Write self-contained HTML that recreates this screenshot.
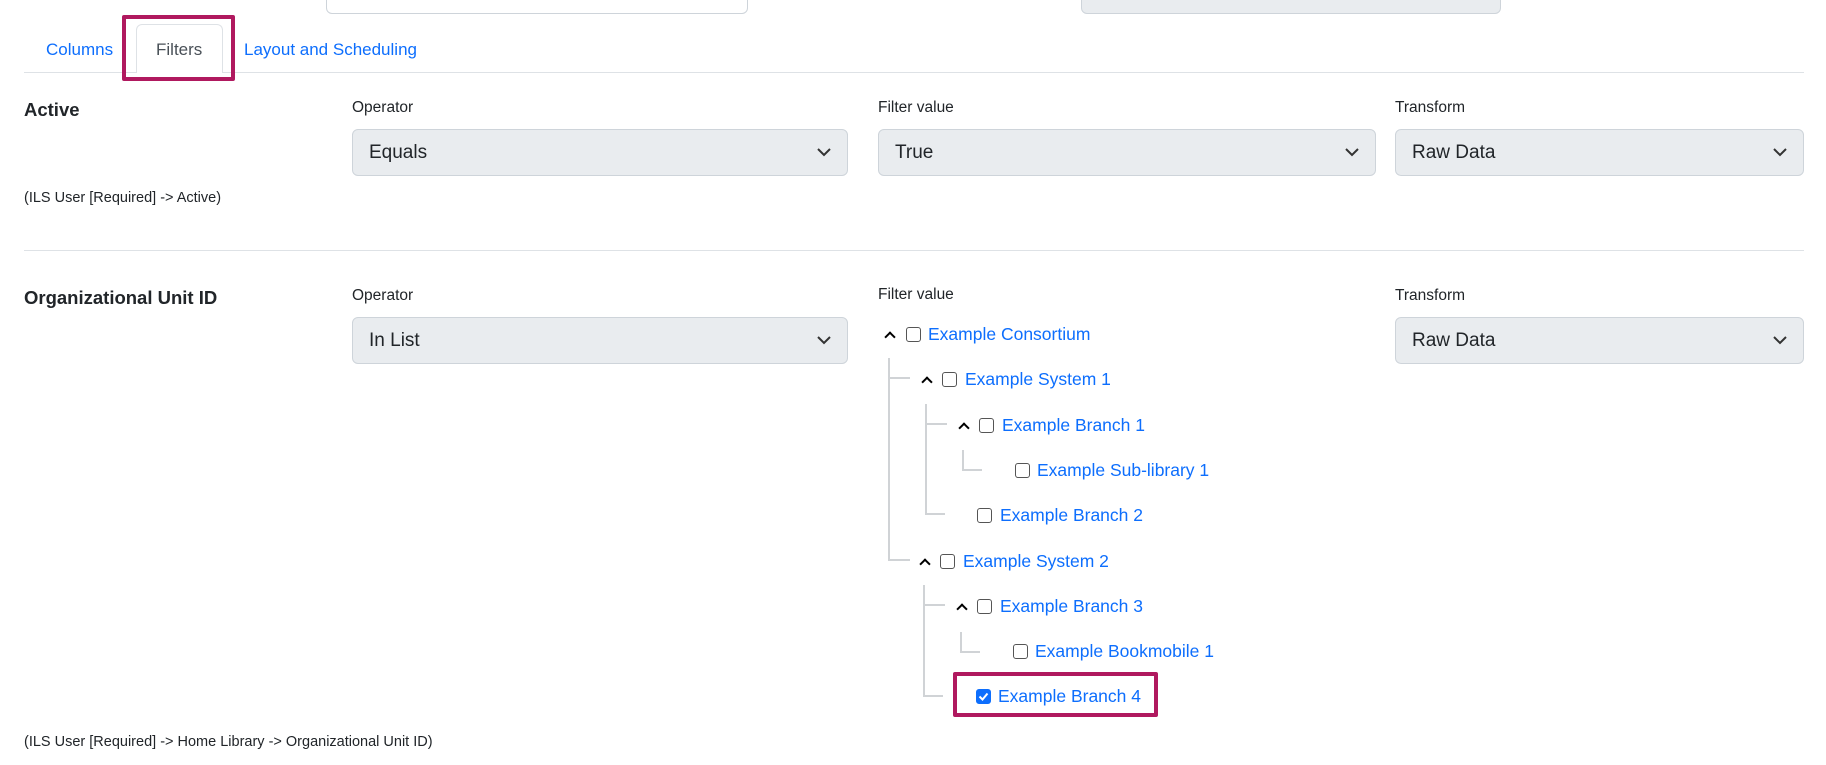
<!DOCTYPE html>
<html><head><style>
body{margin:0;width:1826px;height:765px;background:#fff;font-family:"Liberation Sans",sans-serif;position:relative;overflow:hidden;color:#212529}
.a{position:absolute;white-space:nowrap}
.sel{position:absolute;background:#e9ecef;border:1px solid #ced4da;border-radius:6px;box-sizing:border-box;font-size:19px;padding-left:16px;display:flex;align-items:center}
.sel svg{position:absolute;right:16px;top:50%;margin-top:-6px}
.lbl{font-size:15.5px}
.h{font-size:18.5px;font-weight:bold}
.lnk{color:#0d6efd;font-size:17.5px}
.cb{position:absolute;width:15px;height:15px;border:1.5px solid #555;border-radius:3px;box-sizing:border-box}
.ch{position:absolute;width:6px;height:6px;border-left:2px solid #000;border-top:2px solid #000;transform:rotate(45deg)}
.ln{position:absolute;background:#d0d3d6}
</style></head><body>
<div class="a" style="left:326px;top:-6px;width:422px;height:20px;border:1px solid #ced4da;border-radius:6px;box-sizing:border-box"></div>
<div class="a" style="left:1081px;top:-6px;width:420px;height:20px;background:#e9ecef;border:1px solid #ced4da;border-radius:6px;box-sizing:border-box"></div>
<div class="a" style="left:24px;top:72px;width:1780px;height:1px;background:#dee2e6"></div>
<div class="a" style="left:136px;top:24px;width:87px;height:49px;border:1px solid #dee2e6;border-bottom:none;border-radius:6px 6px 0 0;background:#fff;box-sizing:border-box"></div>
<div class="a lnk" style="left:46px;top:40px;font-size:17px">Columns</div>
<div class="a" style="left:156px;top:40px;font-size:17px;color:#495057">Filters</div>
<div class="a lnk" style="left:244px;top:40px;font-size:17px">Layout and Scheduling</div>
<div class="a" style="left:122px;top:15px;width:113px;height:66px;border:4px solid #b0195f;box-sizing:border-box;border-radius:2px"></div>

<div class="a h" style="left:24px;top:99px">Active</div>
<div class="a lbl" style="left:352px;top:99px">Operator</div>
<div class="a lbl" style="left:878px;top:99px">Filter value</div>
<div class="a lbl" style="left:1395px;top:99px">Transform</div>
<div class="sel" style="left:352px;top:129px;width:496px;height:47px">Equals<svg width="14" height="10"><path d="M1 2l6 6 6-6" fill="none" stroke="#333" stroke-width="2"/></svg></div>
<div class="sel" style="left:878px;top:129px;width:498px;height:47px">True<svg width="14" height="10"><path d="M1 2l6 6 6-6" fill="none" stroke="#333" stroke-width="2"/></svg></div>
<div class="sel" style="left:1395px;top:129px;width:409px;height:47px">Raw Data<svg width="14" height="10"><path d="M1 2l6 6 6-6" fill="none" stroke="#333" stroke-width="2"/></svg></div>
<div class="a" style="left:24px;top:190px;font-size:14.5px">(ILS User [Required] -&gt; Active)</div>
<div class="a" style="left:24px;top:250px;width:1780px;height:1px;background:#dee2e6"></div>

<div class="a h" style="left:24px;top:287px">Organizational Unit ID</div>
<div class="a lbl" style="left:352px;top:287px">Operator</div>
<div class="a lbl" style="left:878px;top:286px">Filter value</div>
<div class="a lbl" style="left:1395px;top:287px">Transform</div>
<div class="sel" style="left:352px;top:317px;width:496px;height:47px">In List<svg width="14" height="10"><path d="M1 2l6 6 6-6" fill="none" stroke="#333" stroke-width="2"/></svg></div>
<div class="sel" style="left:1395px;top:317px;width:409px;height:47px">Raw Data<svg width="14" height="10"><path d="M1 2l6 6 6-6" fill="none" stroke="#333" stroke-width="2"/></svg></div>

<div class="ln" style="left:888px;top:358px;width:2px;height:202px"></div>
<div class="ln" style="left:888px;top:377px;width:22px;height:2px"></div>
<div class="ln" style="left:888px;top:559px;width:22px;height:2px"></div>
<div class="ln" style="left:925px;top:404px;width:2px;height:110px"></div>
<div class="ln" style="left:925px;top:423px;width:22px;height:2px"></div>
<div class="ln" style="left:925px;top:513px;width:20px;height:2px"></div>
<div class="ln" style="left:962px;top:450px;width:2px;height:20px"></div>
<div class="ln" style="left:962px;top:469px;width:20px;height:2px"></div>
<div class="ln" style="left:923px;top:585px;width:2px;height:112px"></div>
<div class="ln" style="left:923px;top:604px;width:22px;height:2px"></div>
<div class="ln" style="left:923px;top:695px;width:20px;height:2px"></div>
<div class="ln" style="left:960px;top:632px;width:2px;height:20px"></div>
<div class="ln" style="left:960px;top:651px;width:20px;height:2px"></div>

<div class="ch" style="left:886px;top:333px"></div><div class="cb" style="left:906px;top:327px"></div><div class="a lnk" style="left:928px;top:324px">Example Consortium</div>
<div class="ch" style="left:923px;top:378px"></div><div class="cb" style="left:942px;top:372px"></div><div class="a lnk" style="left:965px;top:369px">Example System 1</div>
<div class="ch" style="left:960px;top:424px"></div><div class="cb" style="left:979px;top:418px"></div><div class="a lnk" style="left:1002px;top:415px">Example Branch 1</div>
<div class="cb" style="left:1015px;top:463px"></div><div class="a lnk" style="left:1037px;top:460px">Example Sub-library 1</div>
<div class="cb" style="left:977px;top:508px"></div><div class="a lnk" style="left:1000px;top:505px">Example Branch 2</div>
<div class="ch" style="left:921px;top:560px"></div><div class="cb" style="left:940px;top:554px"></div><div class="a lnk" style="left:963px;top:551px">Example System 2</div>
<div class="ch" style="left:958px;top:605px"></div><div class="cb" style="left:977px;top:599px"></div><div class="a lnk" style="left:1000px;top:596px">Example Branch 3</div>
<div class="cb" style="left:1013px;top:644px"></div><div class="a lnk" style="left:1035px;top:641px">Example Bookmobile 1</div>
<div class="cb" style="left:976px;top:689px;background:#0d6efd;border-color:#0d6efd"><svg width="15" height="15" style="position:absolute;left:-1.5px;top:-1.5px"><path d="M3.5 7.5l3 3 5-6" fill="none" stroke="#fff" stroke-width="2"/></svg></div><div class="a lnk" style="left:998px;top:686px">Example Branch 4</div>
<div class="a" style="left:953px;top:672px;width:205px;height:45px;border:4px solid #b0195f;box-sizing:border-box;border-radius:2px"></div>

<div class="a" style="left:24px;top:734px;font-size:14.5px">(ILS User [Required] -&gt; Home Library -&gt; Organizational Unit ID)</div>
</body></html>
